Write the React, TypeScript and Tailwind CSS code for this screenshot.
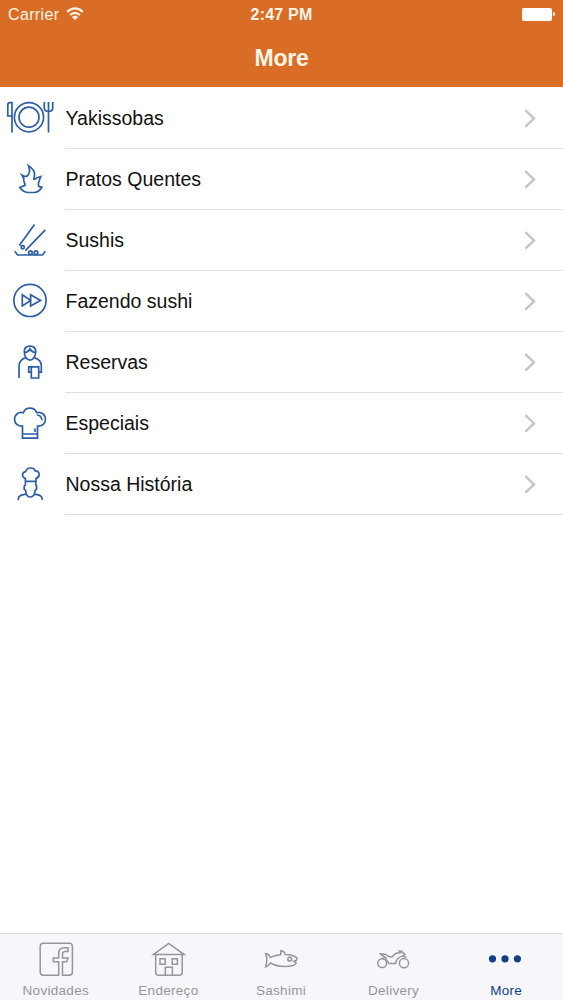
import type { ReactNode } from 'react'

function PlateIcon() {
  return (
    <>
      <path d="M12 44.4V14.7H10Q7.8 14.7 7.8 16.9V28H12" />
      <circle cx="29" cy="29.2" r="14.6" />
      <circle cx="29" cy="29.2" r="10" />
      <path d="M44.3 14V20.2Q44.3 23.4 48.5 23.4Q52.7 23.4 52.7 20.2V14M48.5 14V44.4" />
    </>
  )
}

function FlameIcon() {
  return (
    <path d="M28.5 16.6C32 19 34.8 22 34.6 25.5Q34.3 28 33.8 30.2Q36 30.4 37 28.8L40.6 27.8C39.4 29.5 40 31.5 38.6 33.4Q38 36 38.8 37.4L41.8 38.2C40 41.3 37.5 43.4 34 43.5H28C24.5 43.2 21.8 41.5 19.8 38.5L25 36.4C25 33 22.8 32 23.8 29.5L22 26.2Q25 28 27 27.2C30 24.5 29.8 20 28.5 16.6Z" />
  )
}

function ChopsticksIcon() {
  return (
    <>
      <path d="M34.5 14.6L19.3 35.6M45.3 19.9L25.3 40.6" />
      <circle cx="22.7" cy="37.3" r="1.6" />
      <path d="M14.7 41.3L17.7 45H42.5L45.3 41.3" />
      <circle cx="30.4" cy="42.7" r="1.8" />
      <circle cx="36" cy="42.7" r="1.8" />
    </>
  )
}

function ForwardIcon() {
  return (
    <>
      <circle cx="30" cy="29.4" r="16.1" />
      <path d="M22.3 23.8L30.6 29.4L22.3 35ZM30.6 23.8L40.5 29.4L30.6 35Z" />
    </>
  )
}

function WaiterIcon() {
  return (
    <>
      <path d="M24.3 19.6C24.3 16 26.5 14.1 30 14.1S35.7 16 35.7 19.6C35.7 24.6 33 28.1 30 28.1S24.3 24.6 24.3 19.6Z" />
      <path d="M24.5 20.5Q28.5 20 30 17Q31.5 20 35.5 20.5" />
      <path d="M19 46V34.6C19 29.6 21 27.1 25.8 25.6M34.3 25.6C39 27.1 41.3 29.6 41.3 33.6V40.2H38.7" />
      <path d="M31.3 34.8H38.7V46H31.3ZM31.3 34.8H28.7V40.2H31.3" />
    </>
  )
}

function ChefHatIcon() {
  return (
    <>
      <path d="M22.5 45.2V33.2C17.8 33.4 14.6 30.3 14.6 26.4C14.6 21.6 18.5 18.4 23.3 19.8C24.5 16.6 27 15.2 30 15.2S35.5 16.6 36.7 19.8C41.5 18.4 45.4 21.6 45.4 26.4C45.4 30.3 42.2 33.4 37.5 33.2V45.2Z" />
      <path d="M22.5 41H37.5M35 35.6V39M36.8 22Q41.5 22.2 42 27.2" />
    </>
  )
}

function ChefIcon() {
  return (
    <>
      <path d="M25.4 27.4V24.4C21.2 23.3 21.8 18.2 25.7 17.6C26.7 13 34 12.9 35.2 16.9C40.2 17.1 40.4 23 36 24.4V27.4ZM25.4 27.4V31L24.2 32.2V35.2L25.7 36.7C26 40.5 27.8 43 30.4 43S34.7 40.5 35.1 36.7L36.6 35.2V32.2L35.8 31V27.4" />
      <path d="M18.2 46C18.2 41.3 20.7 41.3 26.3 40.1M34.5 40.1C39.8 41.3 42.2 41.3 42.2 46" />
    </>
  )
}

function FacebookIcon() {
  return (
    <path d="M22.7 36.3H7.4Q4.2 36.3 4.2 33.1V7.4Q4.2 4.2 7.4 4.2H33.2Q36.4 4.2 36.4 7.4V33.1Q36.4 36.3 33.2 36.3H26.5V22.8H30.8L32 19H26.5V15.5Q26.5 12.6 29 12.6H32V8.8H28.3Q22.7 8.8 22.7 14.6V19H17.3V22.8H22.7Z" />
  )
}

function HouseIcon() {
  return (
    <>
      <path d="M4.3 15.6L19.7 4.4L35.2 15.6Z" />
      <path d="M6.7 15.6V33.3Q6.7 36.3 9.7 36.3H30.2Q33.2 36.3 33.2 33.3V15.6M16.3 36.3V28.2H23.4V36.3M11 19.8H16.2V25.2H11ZM23.2 19.8H28.4V25.2H23.2Z" />
    </>
  )
}

function FishIcon() {
  return (
    <>
      <path d="M4.7 14.6Q8 15 9.3 18.4Q13.5 16.4 19.6 15.8L19.8 11.8Q23.5 12 24.2 15.6Q31 15.6 36 18.8L35.6 21.2L32.8 22.2L35.3 23.8Q34.5 26 32.2 26.5Q19 29.2 9.3 24Q7.7 27 4.7 27.8Q7 21 4.7 14.6Z" />
      <circle cx="28.7" cy="20.2" r="1.9" />
    </>
  )
}

function MotorcycleIcon() {
  return (
    <>
      <circle cx="8.2" cy="24.2" r="4.4" />
      <circle cx="30" cy="24.2" r="4.6" />
      <path d="M5.5 14.7L11 15.2L15.2 17.8H18.2L21.4 14.4L26.6 13.6L25.4 12.2L27.6 12.3L31 15.6L28.4 17.1L32.6 18.4M5.5 14.7L11.4 18.6L7.6 19.8M11.6 19.4L15 24.4H21.6C22 20.8 23.6 18.6 28.4 17.1" />
    </>
  )
}

function MoreIcon() {
  return (
    <g fill="currentColor" stroke="none">
      <circle cx="5.5" cy="19.8" r="3.6" />
      <circle cx="18" cy="19.8" r="3.6" />
      <circle cx="30.4" cy="19.8" r="3.6" />
    </g>
  )
}

const items: { label: string; icon: ReactNode }[] = [
  { label: 'Yakissobas', icon: <PlateIcon /> },
  { label: 'Pratos Quentes', icon: <FlameIcon /> },
  { label: 'Sushis', icon: <ChopsticksIcon /> },
  { label: 'Fazendo sushi', icon: <ForwardIcon /> },
  { label: 'Reservas', icon: <WaiterIcon /> },
  { label: 'Especiais', icon: <ChefHatIcon /> },
  { label: 'Nossa História', icon: <ChefIcon /> },
]

const tabs: { label: string; icon: ReactNode; active?: boolean }[] = [
  { label: 'Novidades', icon: <FacebookIcon /> },
  { label: 'Endereço', icon: <HouseIcon /> },
  { label: 'Sashimi', icon: <FishIcon /> },
  { label: 'Delivery', icon: <MotorcycleIcon /> },
  { label: 'More', icon: <MoreIcon />, active: true },
]

function Header() {
  return (
    <header className="h-[87px] shrink-0 bg-[#d96d25] text-[#fff5e8]">
      <div className="grid h-[30px] grid-cols-3 items-center pl-2 pr-[8px] text-[16px]">
        <div className="flex items-center gap-[7px]">
          <span className="tracking-[0.35px]">Carrier</span>
          <svg width="18" height="14" viewBox="0 0 18 14" className="-mt-0.5" fill="none" stroke="currentColor" strokeWidth="2.1">
            <path d="M1.2 4.9Q9 -2 16.8 4.9M4 8Q9 3.6 14 8" />
            <path d="M9 13L5.9 10Q9 7.6 12.1 10Z" fill="currentColor" stroke="none" />
          </svg>
        </div>
        <span className="whitespace-nowrap text-center font-bold tracking-[0.2px]">2:47 PM</span>
        <div className="-mt-0.5 flex items-center justify-end gap-px text-white">
          <span className="h-[13px] w-[30px] rounded-[2px] bg-current" />
          <span className="h-1 w-[2px] rounded-r-full bg-current" />
        </div>
      </div>
      <h1 className="text-center text-[23px] font-bold leading-[56px] tracking-[-0.2px]">More</h1>
    </header>
  )
}

export default function App() {
  return (
    <div className="flex h-[1000px] w-[563px] flex-col overflow-hidden bg-white font-['Liberation_Sans',Arial,sans-serif]">
      <Header />
      <ul className="flex-1 pt-[0.6px]">
        {items.map((item) => (
          <li key={item.label} className="flex h-[61.1px]">
            <svg width="60" height="61" viewBox="0 0 60 61" className="mr-[5px] shrink-0 text-[#2f5ea3]" fill="none" stroke="currentColor" strokeWidth="1.7">
              {item.icon}
            </svg>
            <div className="flex flex-1 items-center justify-between border-b border-[#e0e0e0] pr-[26px] pt-px">
              <span className="pl-[0.5px] pt-[0.5px] text-[19.5px] text-[#111]">{item.label}</span>
              <svg width="13" height="20" viewBox="0 0 13 20" className="-mt-px" fill="none" stroke="#c5c5c8" strokeWidth="2.4">
                <path d="M1.4 2.2L10 10.4L1.4 18.6" />
              </svg>
            </div>
          </li>
        ))}
      </ul>
      <nav className="grid h-[67px] shrink-0 grid-cols-5 border-t border-[#d9d8dd] bg-[#f7f6fa]">
        {tabs.map((tab) => (
          <div
            key={tab.label}
            className={`flex flex-col items-center pt-[5px] ${tab.active ? 'text-[#113f88]' : 'text-[#96969a]'}`}
          >
            <svg width="40" height="40" viewBox="0 0 40 40" fill="none" stroke="currentColor" strokeWidth="1.5">
              {tab.icon}
            </svg>
            <span className="mt-1 pr-px text-[13.5px] leading-4 tracking-[0.3px]">{tab.label}</span>
          </div>
        ))}
      </nav>
    </div>
  )
}
